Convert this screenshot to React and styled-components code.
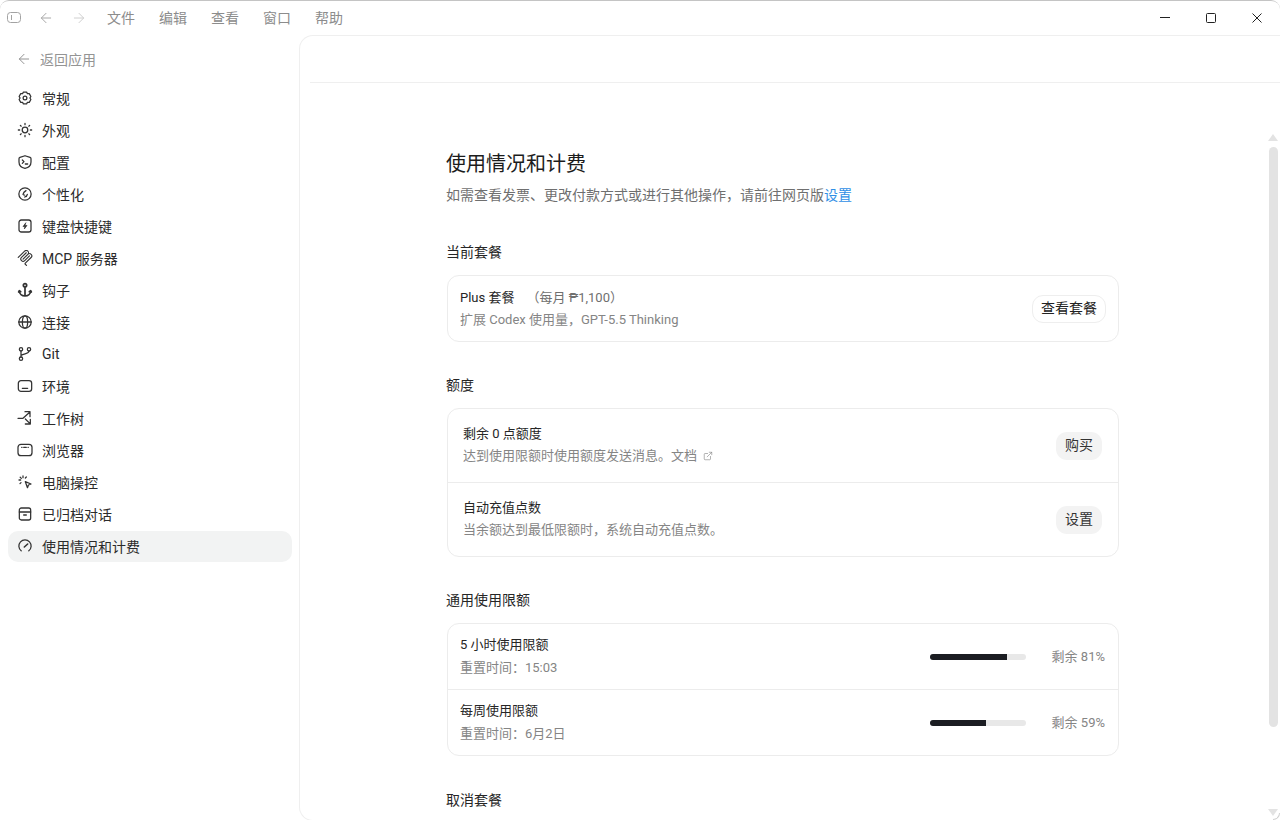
import React from "react"
import styled, { createGlobalStyle } from "styled-components"
import { ArrowLeft, ArrowRight, ExternalLink } from "lucide-react"

const GlobalStyle = createGlobalStyle`
  html, body {
    margin: 0;
    height: 100%;
    background: #fff;
    overflow: hidden;
  }
  * {
    box-sizing: border-box;
  }
  body {
    font-family: Roboto, "Noto Sans CJK SC", sans-serif;
    font-size: 14px;
    color: #1f1f1f;
  }
`

const Window = styled.div`
  display: flex;
  flex-direction: column;
  width: 1280px;
  height: 820px;
  background: #fff;
  border-top: 1px solid #c4c4c4;
  border-radius: 9px 9px 0 0;
  overflow: hidden;
`

const TitleBar = styled.header`
  display: flex;
  align-items: center;
  flex: 0 0 34px;
  padding-left: 7px;
`

const BarIcon = styled.span`
  display: flex;
  margin-right: ${p => p.$gap}px;
  color: ${p => p.$color};
`

const Menu = styled.nav`
  display: flex;
  gap: 24px;
  flex: 1;
  color: #8c8c8c;
`

const MenuItem = styled.span`
  line-height: 20px;
`

const WinButton = styled.span`
  display: flex;
  align-items: center;
  justify-content: center;
  width: 46px;
  height: 34px;
  color: #222;
`

const Body = styled.div`
  display: flex;
  flex: 1;
  min-height: 0;
`

const Sidebar = styled.aside`
  display: flex;
  flex-direction: column;
  flex: 0 0 299px;
  padding: 0 7px 0 8px;
`

const Back = styled.div`
  display: flex;
  align-items: center;
  gap: 8px;
  height: 20px;
  margin: 14px 0 14px 8px;
  color: #949494;
`

const NavList = styled.div`
  display: flex;
  flex-direction: column;
  gap: 1px;
`

const NavItem = styled.div`
  display: flex;
  align-items: center;
  gap: 9px;
  height: 31px;
  padding: 0 0 2px 9px;
  border-radius: 10px;
  color: #2b2b2b;
  background: ${p => (p.$active ? "#f2f3f3" : "transparent")};
`

const NavIcon = styled.svg`
  flex: 0 0 16px;
  width: 16px;
  height: 16px;
  fill: none;
  stroke: #333;
  stroke-width: 1.9;
  stroke-linecap: round;
  stroke-linejoin: round;
`

const Main = styled.main`
  position: relative;
  flex: 1;
  min-width: 0;
  margin-bottom: -1px;
  border: 1px solid #efefef;
  border-right: none;
  border-radius: 14px 0 0 14px;
  overflow: hidden;
`

const MainTop = styled.div`
  height: 47px;
  margin-left: 10px;
  border-bottom: 1px solid #efefef;
`

const Content = styled.div`
  width: 672px;
  margin-left: 147px;
  padding-top: 67px;
`

const Title = styled.h1`
  margin: 0 0 0 -1px;
  font-size: 20px;
  font-weight: 400;
  line-height: 28px;
  color: #1c1c1c;
`

const Lead = styled.p`
  margin: 6px 0 0 -1px;
  line-height: 22px;
  color: #6f6f6f;
`

const LeadLink = styled.a`
  color: #2f8fe6;
`

const Section = styled.section`
  margin-top: ${p => p.$top || 33}px;
`

const SectionLabel = styled.h2`
  margin: 0 0 13px -1px;
  font-size: 14px;
  font-weight: 400;
  line-height: 20px;
  color: #262626;
`

const Card = styled.div`
  border: 1px solid #ececec;
  border-radius: 12px;
`

const Row = styled.div`
  display: flex;
  align-items: center;
  justify-content: space-between;
  height: ${p => p.$height}px;
  padding: 0 ${p => p.$right}px 0 ${p => p.$left}px;

  & + & {
    border-top: 1px solid #ececec;
  }
`

const RowText = styled.div`
  display: flex;
  flex-direction: column;
  gap: ${p => p.$gap}px;
  padding-bottom: ${p => p.$lift || 0}px;
  font-size: 13px;
  line-height: 18px;
`

const RowTitle = styled.div`
  color: #262626;
`

const Price = styled.span`
  margin-left: 12px;
  color: #6f6f6f;
`

const RowSub = styled.div`
  display: flex;
  align-items: center;
  gap: 6px;
  color: #858585;
`

const OutlineButton = styled.button`
  height: 28px;
  padding: 0 8px 2px;
  border: 1px solid #eeeeee;
  border-radius: 11px;
  background: #fff;
  color: #222;
  font: inherit;
  line-height: 1;
`

const SoftButton = styled(OutlineButton)`
  padding: 0 9px 2px;
  border: none;
  background: #f3f3f3;
  color: #333;
`

const Usage = styled.div`
  display: flex;
  align-items: center;
  padding-bottom: 2px;
  font-size: 13px;
  color: #858585;
`

const Track = styled.div`
  width: 96px;
  height: 6px;
  margin: 2px 26px 0 0;
  border-radius: 3px;
  background: #e8e8e8;
  overflow: hidden;
`

const Fill = styled.div`
  height: 100%;
  background: #1b1d22;
`

const ScrollTrack = styled.div`
  position: absolute;
  top: 98px;
  right: 2px;
  bottom: 3px;
  display: flex;
  flex-direction: column;
  align-items: center;
  width: 10px;
`

const ScrollThumb = styled.div`
  width: 9px;
  height: 580px;
  margin: 6px 0 82px;
  border-radius: 5px;
  background: #e3e3e3;
`

const ScrollArrow = styled.div`
  flex: 0 0 7px;
  width: 0;
  height: 0;
  border-left: 5px solid transparent;
  border-right: 5px solid transparent;
  ${p => (p.$down ? "border-top" : "border-bottom")}: 7px solid #e3e3e3;
`

const WindowCorner = styled.div`
  position: absolute;
  right: 0;
  bottom: 0;
  width: 7px;
  height: 7px;
  border-right: 1px solid #cfcfcf;
  border-bottom: 1px solid #cfcfcf;
  border-bottom-right-radius: 7px;
`

const icons = {
  gear: (
    <>
      <path d="M9.6 3.2h4.8l1.3 2.4 2.7-.1 2.4 4.2-1.4 2.3 1.4 2.3-2.4 4.2-2.7-.1-1.3 2.4H9.6l-1.3-2.4-2.7.1-2.4-4.2L4.6 12 3.2 9.7l2.4-4.2 2.7.1z" />
      <circle cx="12" cy="12" r="2.8" />
    </>
  ),
  sun: (
    <>
      <circle cx="12" cy="12" r="4.2" />
      <path d="M12 2v2M12 20v2M2 12h2M20 12h2M5 5l1.3 1.3M17.7 17.7 19 19M5 19l1.3-1.3M17.7 6.3 19 5" />
    </>
  ),
  config: (
    <>
      <path d="M12 2.6 19.6 5.2c.9.3 1.4 1.1 1.4 2V12c0 5-3.6 8.4-9 9.4-5.400-1-9-4.400-9-9.400V7.200c0-.9.5-1.700 1.400-2z" />
      <path d="m8 9 2.500 2.500L8 14M12.500 15h3.500" />
    </>
  ),
  persona: (
    <>
      <circle cx="12" cy="12" r="9.200" />
      <path d="M13.500 7C11 8.500 9.500 10.500 9 12.500M15.500 12.500c-.3 2.200-1.900 3.500-4 4M9 12.500c.8.8 1.500 1.100 2.500 1.100" />
    </>
  ),
  keyboard: (
    <>
      <rect x="3" y="3" width="18" height="18" rx="3.500" />
      <path d="M13 7.500 9 12.800h2.800L11 16.500l4-5.300h-2.800z" fill="#333" strokeWidth="1" />
    </>
  ),
  anchor: (
    <>
      <circle cx="12" cy="5" r="2.500" strokeWidth="2.600" />
      <path d="M12 8v13M3.500 13.500c0 4.500 4 7.500 8.500 7.500s8.500-3 8.500-7.500M2.500 15l1-2 2 1.500M21.500 15l-1-2-2 1.500" strokeWidth="2.600" />
    </>
  ),
  globe: (
    <>
      <circle cx="12" cy="12" r="9.300" />
      <ellipse cx="12" cy="12" rx="4" ry="9.300" />
      <path d="M2.700 12h18.600" />
    </>
  ),
  git: (
    <>
      <circle cx="6" cy="5" r="2.500" />
      <circle cx="6" cy="19" r="2.500" />
      <circle cx="18" cy="5" r="2.500" />
      <path d="M6 7.500v9M18 7.500c0 4.500-7 3.500-12 6.500" />
    </>
  ),
  env: (
    <>
      <rect x="2" y="4" width="20" height="16" rx="4" />
      <path d="M8 15.500h8" />
    </>
  ),
  tree: <path d="M1.500 12.500H9L19 3.500M12 2.500h7.500V10M12.500 13.500l7 7M20 14v7h-7.500" />,
  browser: (
    <>
      <rect x="1.500" y="3.500" width="21" height="17" rx="4.500" />
      <path d="M7 8h.6M10 8h4M16.500 8h.5" />
    </>
  ),
  computer: (
    <>
      <path d="M12.500 11.500 21 15l-3.800 1.500-1.500 4z" />
      <path d="M9 3v2.500M3 9h2.500M4.800 4.800l1.700 1.700M14 4.500l-1.500 1.500M4.500 14.500 6 13" />
    </>
  ),
  archive: (
    <>
      <rect x="3.500" y="3" width="17" height="18" rx="3" />
      <path d="M3.500 9h17M10 13.500h4" />
    </>
  ),
  gauge: (
    <>
      <path d="M6.300 19.200a9.200 9.200 0 1 1 11.400 0" />
      <path d="m11 13.500 5-4.500" strokeWidth="2.400" />
    </>
  ),
}

const mcpIcon = (
  <g fill="#333" stroke="none">
    <path d="M15.688 2.343a2.588 2.588 0 00-3.61 0l-9.626 9.44a.863.863 0 01-1.203 0 .823.823 0 010-1.18l9.626-9.44a4.313 4.313 0 016.016 0 4.116 4.116 0 011.204 3.54 4.3 4.3 0 013.609 1.18l.05.05a4.115 4.115 0 010 5.9l-8.706 8.537a.274.274 0 000 .393l1.788 1.754a.823.823 0 010 1.18.863.863 0 01-1.203 0l-1.788-1.753a1.92 1.92 0 010-2.754l8.706-8.538a2.47 2.47 0 000-3.54l-.05-.049a2.588 2.588 0 00-3.607-.003l-7.172 7.034-.002.002-.098.097a.863.863 0 01-1.204 0 .823.823 0 010-1.18l7.273-7.133a2.47 2.47 0 00-.003-3.537z" />
    <path d="M14.485 4.703a.823.823 0 000-1.18.863.863 0 00-1.204 0l-7.119 6.982a4.115 4.115 0 000 5.9 4.314 4.314 0 006.016 0l7.12-6.982a.823.823 0 000-1.18.863.863 0 00-1.204 0l-7.119 6.982a2.588 2.588 0 01-3.61 0 2.47 2.47 0 010-3.54l7.12-6.982z" />
  </g>
)

const navItems = [
  ["gear", "常规"],
  ["sun", "外观"],
  ["config", "配置"],
  ["persona", "个性化"],
  ["keyboard", "键盘快捷键"],
  ["mcp", "MCP 服务器"],
  ["anchor", "钩子"],
  ["globe", "连接"],
  ["git", "Git"],
  ["env", "环境"],
  ["tree", "工作树"],
  ["browser", "浏览器"],
  ["computer", "电脑操控"],
  ["archive", "已归档对话"],
  ["gauge", "使用情况和计费"],
]

const menus = ["文件", "编辑", "查看", "窗口", "帮助"]

const limits = [
  { name: "5 小时使用限额", reset: "重置时间：15:03", left: 81, height: 65 },
  { name: "每周使用限额", reset: "重置时间：6月2日", left: 59, height: 66 },
]

function PanelIcon() {
  return (
    <svg width="14" height="14" viewBox="0 0 14 14" fill="none" stroke="currentColor">
      <rect x="0.5" y="1.5" width="13" height="10" rx="3" />
      <path d="M4.500 4v5" />
    </svg>
  )
}

function WinGlyph({ type }) {
  return (
    <svg width="10" height="10" viewBox="0 0 10 10" fill="none" stroke="currentColor">
      {type === "min" && <path d="M0 4.500h10" />}
      {type === "max" && <rect x="0.5" y="0.5" width="9" height="9" rx="1" />}
      {type === "close" && <path d="M.5.500l9 9M9.500.500l-9 9" />}
    </svg>
  )
}

function App() {
  return (
    <>
      <GlobalStyle />
      <Window>
        <TitleBar>
          <BarIcon $gap={17} $color="#a3a3a3">
            <PanelIcon />
          </BarIcon>
          <BarIcon $gap={17} $color="#a8a8a8">
            <ArrowLeft size={16} strokeWidth={1.5} />
          </BarIcon>
          <BarIcon $gap={20} $color="#d0d0d0">
            <ArrowRight size={16} strokeWidth={1.5} />
          </BarIcon>
          <Menu>
            {menus.map(m => (
              <MenuItem key={m}>{m}</MenuItem>
            ))}
          </Menu>
          <WinButton>
            <WinGlyph type="min" />
          </WinButton>
          <WinButton>
            <WinGlyph type="max" />
          </WinButton>
          <WinButton>
            <WinGlyph type="close" />
          </WinButton>
        </TitleBar>
        <Body>
          <Sidebar>
            <Back>
              <ArrowLeft size={16} strokeWidth={1.5} />
              返回应用
            </Back>
            <NavList>
              {navItems.map(([icon, label], i) => (
                <NavItem key={label} $active={i === navItems.length - 1}>
                  <NavIcon viewBox="0 0 24 24">{icon === "mcp" ? mcpIcon : icons[icon]}</NavIcon>
                  {label}
                </NavItem>
              ))}
            </NavList>
          </Sidebar>
          <Main>
            <MainTop />
            <Content>
              <Title>使用情况和计费</Title>
              <Lead>
                如需查看发票、更改付款方式或进行其他操作，请前往网页版<LeadLink>设置</LeadLink>
              </Lead>

              <Section $top={36}>
                <SectionLabel>当前套餐</SectionLabel>
                <Card>
                  <Row $height={65} $left={12} $right={12}>
                    <RowText $gap={4}>
                      <RowTitle>
                        Plus 套餐<Price>（每月 ₱1,100）</Price>
                      </RowTitle>
                      <RowSub>扩展 Codex 使用量，GPT-5.5 Thinking</RowSub>
                    </RowText>
                    <OutlineButton>查看套餐</OutlineButton>
                  </Row>
                </Card>
              </Section>

              <Section>
                <SectionLabel>额度</SectionLabel>
                <Card>
                  <Row $height={73} $left={15} $right={16}>
                    <RowText $gap={4} $lift={1}>
                      <RowTitle>剩余 0 点额度</RowTitle>
                      <RowSub>
                        达到使用限额时使用额度发送消息。文档
                        <ExternalLink size={10} strokeWidth={1.5} />
                      </RowSub>
                    </RowText>
                    <SoftButton>购买</SoftButton>
                  </Row>
                  <Row $height={74} $left={15} $right={16}>
                    <RowText $gap={4} $lift={1}>
                      <RowTitle>自动充值点数</RowTitle>
                      <RowSub>当余额达到最低限额时，系统自动充值点数。</RowSub>
                    </RowText>
                    <SoftButton>设置</SoftButton>
                  </Row>
                </Card>
              </Section>

              <Section>
                <SectionLabel>通用使用限额</SectionLabel>
                <Card>
                  {limits.map(l => (
                    <Row key={l.name} $height={l.height} $left={12} $right={13}>
                      <RowText $gap={5}>
                        <RowTitle>{l.name}</RowTitle>
                        <RowSub>{l.reset}</RowSub>
                      </RowText>
                      <Usage>
                        <Track>
                          <Fill style={{ width: `${l.left}%` }} />
                        </Track>
                        剩余 {l.left}%
                      </Usage>
                    </Row>
                  ))}
                </Card>
              </Section>

              <Section $top={34}>
                <SectionLabel>取消套餐</SectionLabel>
              </Section>
            </Content>
            <ScrollTrack>
              <ScrollArrow />
              <ScrollThumb />
              <ScrollArrow $down />
            </ScrollTrack>
            <WindowCorner />
          </Main>
        </Body>
      </Window>
    </>
  )
}

export default App
